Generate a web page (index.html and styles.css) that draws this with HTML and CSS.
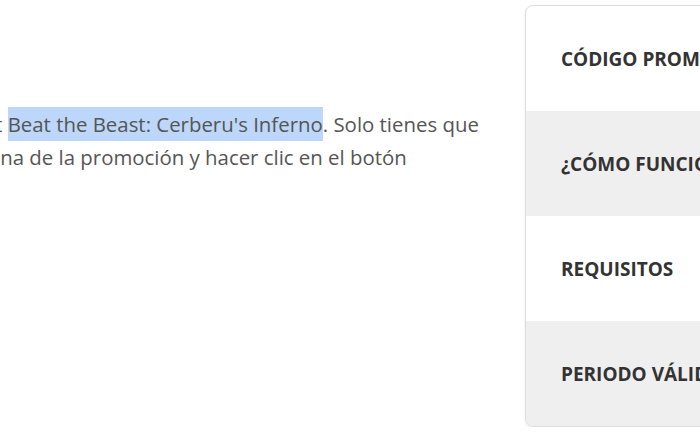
FILE: index.html
```html
<!DOCTYPE html>
<html lang="es">
<head>
  <meta charset="UTF-8" />
  <title>Promoción</title>
  <meta name="viewport" content="width=device-width, initial-scale=1" />
  <link rel="stylesheet" href="styles.css">
</head>
<body>
  <div class="page">
    <div class="content">
      <p class="intro">
        Consigue giros gratis en el slot <span class="mark">Beat the Beast: Cerberu's Inferno</span>. Solo tienes que<br />
        ir a la página de la promoción y hacer clic en el botón
      </p>
    </div>

    <aside class="side">
      <div class="side-item">CÓDIGO PROMOCIONAL</div>
      <div class="side-item alt">¿CÓMO FUNCIONA?</div>
      <div class="side-item">REQUISITOS</div>
      <div class="side-item alt">PERIODO VÁLIDO</div>
    </aside>
  </div>
</body>
</html>
```

FILE: styles.css
```css
body {
  margin: 0;
  font-family: 'Open Sans', sans-serif;
  background: #ffffff;
  color: #555555;
  overflow: hidden;
}
.page {
  display: flex;
  align-items: flex-start;
  width: 1000px;
}
.content {
  width: 525px;
  flex: none;
  padding-top: 108px;
  overflow: hidden;
}
.intro {
  margin: 0 0 0 -97px;
  text-indent: -189px;
  white-space: nowrap;
  font-size: 20.4px;
  line-height: 33px;
}
.mark {
  background: #bcd7f9;
  padding: 3px 0;
}
.side {
  width: 300px;
  margin-top: 5px;
  border: 1px solid #dddddd;
  border-radius: 8px;
  overflow: hidden;
  box-shadow: 0 1px 3px rgba(0, 0, 0, 0.08);
}
.side-item {
  height: 105px;
  display: flex;
  align-items: center;
  padding-left: 35px;
  font-size: 19px;
  font-weight: bold;
  color: #333333;
}
.side-item.alt {
  background: #efefef;
}
```
